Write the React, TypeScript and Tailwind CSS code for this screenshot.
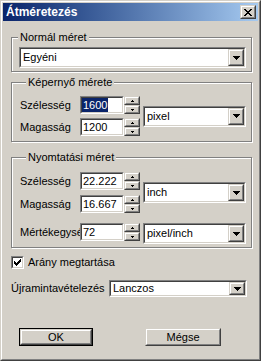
import React from "react";

type P = { className?: string; children?: React.ReactNode };

function Raised({ className = "", children }: P) {
  return (
    <div className={`border border-t-[#d4d0c8] border-l-[#d4d0c8] border-r-[#404040] border-b-[#404040] bg-[#d4d0c8] ${className}`}>
      <div className="flex h-full w-full items-center justify-center border border-t-white border-l-white border-r-[#808080] border-b-[#808080]">
        {children}
      </div>
    </div>
  );
}

function Sunken({ className = "", children }: P) {
  return (
    <div className={`border border-t-[#808080] border-l-[#808080] border-r-white border-b-white ${className}`}>
      <div className="flex h-full w-full items-center border border-t-[#404040] border-l-[#404040] border-r-[#d4d0c8] border-b-[#d4d0c8] bg-white">
        {children}
      </div>
    </div>
  );
}

function DownArrow() {
  return (
    <svg width="7" height="4" viewBox="0 0 7 4" shapeRendering="crispEdges">
      <path d="M0 0H7V1H6V2H5V3H4V4H3V3H2V2H1V1H0Z" fill="#000" />
    </svg>
  );
}

function UpSmall() {
  return (
    <svg width="3" height="2" viewBox="0 0 3 2" shapeRendering="crispEdges">
      <path d="M1 0H2V1H3V2H0V1H1Z" fill="#000" />
    </svg>
  );
}

function DownSmall() {
  return (
    <svg width="3" height="2" viewBox="0 0 3 2" shapeRendering="crispEdges">
      <path d="M0 0H3V1H2V2H1V1H0Z" fill="#000" />
    </svg>
  );
}

function Combo({ value, className = "" }: { value: string; className?: string }) {
  return (
    <Sunken className={className}>
      <span className="flex-1 truncate pl-[2px] text-[11px] leading-none text-black">{value}</span>
      <Raised className="h-full w-[16px] shrink-0">
        <DownArrow />
      </Raised>
    </Sunken>
  );
}

function Spinner() {
  return (
    <div className="flex h-[18px] w-[16px] shrink-0 flex-col">
      <Raised className="h-[9px] w-full">
        <UpSmall />
      </Raised>
      <Raised className="h-[9px] w-full">
        <DownSmall />
      </Raised>
    </div>
  );
}

function FieldRow({ label, value, selected = false }: { label: string; value: string; selected?: boolean }) {
  return (
    <div className="flex items-center">
      <div className="w-[60px] shrink-0 overflow-hidden whitespace-nowrap text-[11px] leading-[13px] text-black">{label}</div>
      <Sunken className="h-[18px] w-[44px] shrink-0">
        {selected ? (
          <span className="bg-[#0a246a] px-[1px] text-[11px] leading-[14px] text-white">{value}</span>
        ) : (
          <span className="pl-[1px] text-[11px] leading-none text-black">{value}</span>
        )}
      </Sunken>
      <Spinner />
    </div>
  );
}

function Group({ label, className = "", children }: P & { label: string }) {
  return (
    <fieldset className={`border border-[#808080] shadow-[inset_1px_1px_0_#fff,1px_1px_0_#fff] ${className}`}>
      <legend className="ml-[6px] bg-[#d4d0c8] px-[2px] text-[11px] leading-[13px] text-black">{label}</legend>
      {children}
    </fieldset>
  );
}

function CheckMark() {
  return (
    <svg width="7" height="7" viewBox="0 0 7 7" shapeRendering="crispEdges">
      <path
        d="M6 0h1v1h-1z M5 1h2v1h-2z M0 2h1v1h-1z M4 2h3v1h-3z M0 3h2v1h-2z M3 3h3v1h-3z M0 4h5v1h-5z M1 5h3v1h-3z M2 6h1v1h-1z"
        fill="#000"
      />
    </svg>
  );
}

function CloseX() {
  return (
    <svg width="8" height="7" viewBox="0 0 8 7" shapeRendering="crispEdges">
      <path
        d="M0 0h2v1H0z M6 0h2v1H6z M1 1h2v1H1z M5 1h2v1H5z M2 2h4v1H2z M3 3h2v1H3z M2 4h4v1H2z M1 5h2v1H1z M5 5h2v1H5z M0 6h2v1H0z M6 6h2v1H6z"
        fill="#000"
      />
    </svg>
  );
}

export default function App() {
  return (
    <div className="h-[361px] w-[261px] overflow-hidden font-['Liberation_Sans',Arial,sans-serif]">
      <div className="h-full w-full border border-t-[#d4d0c8] border-l-[#d4d0c8] border-r-[#404040] border-b-[#404040] bg-[#d4d0c8]">
        <div className="flex h-full w-full flex-col border border-t-white border-l-white border-r-[#808080] border-b-[#808080] p-[1px]">
          {/* Title bar */}
          <div className="flex h-[18px] shrink-0 items-center justify-between bg-linear-to-r from-[#0a246a] to-[#a6caf0] pl-[3px] pr-[2px]">
            <span className="text-[12px] font-bold leading-none text-white">Átméretezés</span>
            <Raised className="h-[14px] w-[16px]">
              <CloseX />
            </Raised>
          </div>

          <div className="flex flex-col pl-[8px] pr-[6px]">
            <Group label="Normál méret" className="mt-[10px] pb-[3px] pt-[3px]">
              <Combo value="Egyéni" className="ml-[7px] mr-[5px] h-[21px]" />
            </Group>

            <Group label="Képernyő mérete" className="mt-[4px] pb-[5px] pl-[8px] pr-[5px] pt-[7px]">
              <div className="flex items-center">
                <div className="flex flex-col gap-[4px]">
                  <FieldRow label="Szélesség" value="1600" selected />
                  <FieldRow label="Magasság" value="1200" />
                </div>
                <Combo value="pixel" className="ml-[3px] h-[21px] flex-1" />
              </div>
            </Group>

            <Group label="Nyomtatási méret" className="mt-[9px] pb-[3px] pl-[8px] pr-[5px] pt-[8px]">
              <div className="flex items-center">
                <div className="flex flex-col gap-[5px]">
                  <FieldRow label="Szélesség" value="22.222" />
                  <FieldRow label="Magasság" value="16.667" />
                </div>
                <Combo value="inch" className="ml-[3px] h-[21px] flex-1" />
              </div>
              <div className="mt-[10px] flex items-start">
                <FieldRow label="Mértékegység" value="72" />
                <Combo value="pixel/inch" className="ml-[3px] h-[21px] flex-1" />
              </div>
            </Group>

            <div className="mt-[8px] flex items-center">
              <Sunken className="h-[13px] w-[13px] shrink-0">
                <div className="flex w-full justify-center">
                  <CheckMark />
                </div>
              </Sunken>
              <span className="ml-[4px] text-[11px] leading-[13px] text-black">Arány megtartása</span>
            </div>

            <div className="mt-[11px] flex items-center">
              <span className="w-[98px] shrink-0 whitespace-nowrap text-[11px] leading-[13px] text-black">Újramintavételezés</span>
              <Combo value="Lanczos" className="mr-[5px] h-[17px] flex-1" />
            </div>

            <div className="mt-[31px] flex">
              <div className="ml-[8px] h-[18px] w-[74px] border border-black">
                <Raised className="h-full w-full">
                  <span className="text-[11px] leading-none text-black">OK</span>
                </Raised>
              </div>
              <Raised className="ml-[52px] h-[18px] w-[76px]">
                <span className="text-[11px] leading-none text-black">Mégse</span>
              </Raised>
            </div>
          </div>
        </div>
      </div>
    </div>
  );
}
